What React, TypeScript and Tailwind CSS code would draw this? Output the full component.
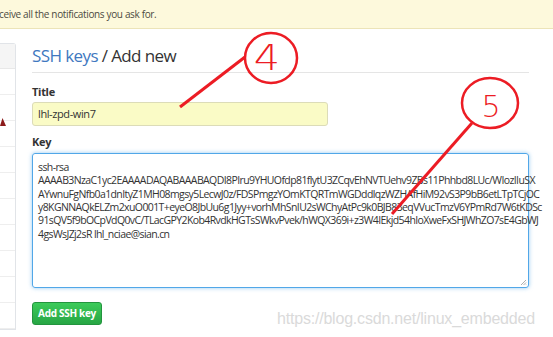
import React from "react";

const keyLines = [
  "ssh-rsa",
  "AAAAB3NzaC1yc2EAAAADAQABAAABAQDI8PIru9YHUOfdp81flytU3ZCqvEhNVTUehv9ZBs11Phhbd8LUc/WIozIIuSX",
  "AYwnuFgNfb0a1dnItyZ1MH08mgsy5LecwJ0z/FDSPmgzYOmKTQRTmWGDddlqzWZHAfHiM92vS3P9bB6etLTpTCjOC",
  "y8KGNNAQkELZm2xuO001T+eyeO8JbUu6g1Jyy+vorhMhSnIU2sWChyAtPc9k0BJB83eqVVucTmzV6YPmRd7W6tKDSc",
  "91sQV5f9bOCpVdQ0vC/TLacGPY2Kob4RvdkHGTsSWkvPvek/hWQX369i+z3W4IEkjd54hIoXweFxSHJWhZO7sE4GbWJ",
  "4gsWsJZj2sR lhl_nciae@sian.cn",
];

export default function App() {
  return (
    <div className="relative w-[553px] h-[337px] overflow-hidden bg-white font-['Open_Sans',sans-serif] text-[#333]">
      <div className="h-[29px] bg-[#fdf9dc] border-b border-[#ece4b8] flex items-center text-[10px] tracking-[-0.35px] text-[#4c4a42] -ml-[1px]">
        ceive all the notifications you ask for.
      </div>
      <div className="flex">
        <div className="w-[16px] mt-[14px] border border-l-0 border-[#e1e4e8] rounded-tr-[3px] flex flex-col">
          <div className="h-[25px] bg-[#f5f5f5] border-b border-[#e8e8e8]" />
          {Array.from({ length: 10 }).map((_, i) => (
            <div key={i} className="h-[26px] border-b border-[#eeeeee] shrink-0" />
          ))}
        </div>
        <div className="ml-[16px] w-[497px] flex flex-col">
          <div className="mt-[15px] leading-[24px] pb-[4px] border-b border-[#e5e5e5] text-[17px] tracking-[-0.6px]">
            <span className="text-[#4078c0]">SSH keys</span>
            <span className="text-[#333]"> / Add new</span>
          </div>
          <div className="mt-[11px] text-[11px] font-bold leading-[16px] tracking-[-0.3px]">Title</div>
          <div className="mt-[2px] w-[296px] h-[24px] bg-[#fafbc6] border border-[#dcdcb8] rounded-[3px] flex items-center px-[5px] text-[11px] tracking-[-0.4px] text-[#333]">
            lhl-zpd-win7
          </div>
          <div className="mt-[8px] text-[11px] font-bold leading-[16px] tracking-[-0.3px]">Key</div>
          <div className="relative mt-[3px] h-[135px] border border-[#51a7e8] rounded-[3px] shadow-[0_0_4px_rgba(81,167,232,0.6)] pt-[7px] px-[5px] text-[10.5px] leading-[13.33px] text-[#333] tracking-[-0.6px]">
            {keyLines.map((l, i) => (
              <div key={i} className="whitespace-pre">{l}</div>
            ))}
            <svg className="absolute right-[1px] bottom-[1px]" width="7" height="7" viewBox="0 0 7 7">
              <path d="M6 1 L1 6 M6 3.5 L3.5 6 M6 5.5 L5.5 6" stroke="#999" strokeWidth="0.8" />
            </svg>
          </div>
          <div className="mt-[11px]">
            <div className="inline-flex items-center justify-center w-[70px] h-[23px] rounded-[3px] border border-[#23943e] bg-gradient-to-b from-[#3ccb5a] to-[#27a644] text-white text-[10px] font-bold tracking-[-0.3px]">
              Add SSH key
            </div>
          </div>
        </div>
      </div>

      <svg className="absolute w-[6px] h-[10px]" style={{ left: 0, top: 117 }} viewBox="0 0 6 10">
        <path d="M0 9 L2.5 1 L6 9 Z" fill="#8b1a1a" />
      </svg>

      <div className="absolute left-[277px] top-[311px] leading-none text-[16px] text-[#dadada] font-['Liberation_Sans',sans-serif] tracking-[-0.2px]">
        https://blog.csdn.net/linux_embedded
      </div>

      <svg className="absolute inset-0 pointer-events-none" width="553" height="337" viewBox="0 0 553 337">
        <ellipse cx="271" cy="58" rx="26" ry="25" fill="none" stroke="#ec1c24" strokeWidth="2.5" />
        <line x1="245" y1="57" x2="180" y2="107" stroke="#ec1c24" strokeWidth="3" />
        <text x="267" y="70" textAnchor="middle" fontSize="36" fill="#ec1c24" fontFamily="DejaVu Sans, sans-serif" fontWeight="200" transform="translate(267 0) scale(1.15 1) translate(-267 0)">4</text>
        <ellipse cx="490" cy="103" rx="28" ry="25" fill="none" stroke="#ec1c24" strokeWidth="2.5" />
        <line x1="472" y1="123" x2="392" y2="214" stroke="#ec1c24" strokeWidth="3" />
        <text x="491" y="117" textAnchor="middle" fontSize="30" fill="#ec1c24" fontFamily="DejaVu Sans, sans-serif" fontWeight="200">5</text>
      </svg>
    </div>
  );
}
